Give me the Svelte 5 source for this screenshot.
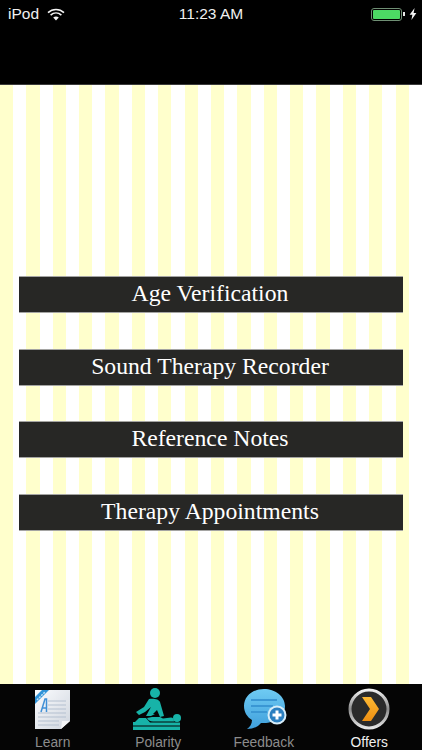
<script>
  const buttons = ['Age Verification', 'Sound Therapy Recorder', 'Reference Notes', 'Therapy Appointments'];
</script>

<div class="page">
  <header class="top">
    <div class="status">
      <div class="left">
        <span>iPod</span>
        <svg class="wifi" viewBox="0 0 18 13" width="18" height="13">
          <path d="M1 4.6C5.6 .4 12.4 .4 17 4.6" fill="none" stroke="#f4f4f4" stroke-width="1.6"/>
          <path d="M3.6 7.2C6.8 4.3 11.2 4.3 14.4 7.2" fill="none" stroke="#f4f4f4" stroke-width="1.6"/>
          <path d="M6.2 9.6C7.9 8.2 10.1 8.2 11.8 9.6L9 12.4Z" fill="#f4f4f4"/>
        </svg>
      </div>
      <span class="time">11:23 AM</span>
      <div class="right">
        <span class="batt"><span class="fill"></span></span>
        <span class="nub"></span>
        <svg class="bolt" viewBox="0 0 8 12" width="8" height="12"><path d="M5.6 0 .6 6.8h2.8L2.4 12l5-7H4.600Z" fill="#f4f4f4"/></svg>
      </div>
    </div>
  </header>

  <main class="stripes">
    {#each buttons as b}
      <div class="btn">{b}</div>
    {/each}
  </main>

  <nav class="tabs">
    <div class="tab learn">
      <svg viewBox="0 0 40 42" width="40" height="42">
        <defs><linearGradient id="doc" x1="0" y1="0" x2="1" y2="1"><stop offset="0" stop-color="#fbfcfe"/><stop offset="1" stop-color="#cfd5de"/></linearGradient></defs>
        <path d="M2 2H37V33L28 41H2Z" fill="url(#doc)"/>
        <path d="M28 41 29 33 37 33Z" fill="#f3f4f6"/>
        <g stroke="#b4bfcf" stroke-width="1.200">
          <path d="M15 13H33M15 17H33M15 21H33M5 25H33M5 29H33M5 33H26M5 37H26"/>
        </g>
        <path d="M2 16V9L9 2H16Z" fill="#2f93d8"/>
        <path d="M4 12 12 4" stroke="#bfe0f5" stroke-width="1.500" stroke-dasharray="2 1"/>
        <path d="M8 24 12 11H13.500V24M9.500 20H13" fill="none" stroke="#3f8fd6" stroke-width="1.500"/>
      </svg>
      <span>Learn</span>
    </div>
    <div class="tab">
      <svg viewBox="0 0 50 42" width="50" height="42" fill="#17b3a8">
        <circle cx="22" cy="5" r="5"/>
        <path d="M16 11C20 10 26 11 27 14L31 28 27 29 24 22 20 26H22L18 28H13L18 19 12 24 6 27 3 24 11 19Z"/>
        <circle cx="44" cy="30" r="4"/>
        <path d="M14 30 19 29H27L30 30.500 38 29.500C40 29.500 41 31 41 33.500H20C17 33.500 15 32 14 30Z"/>
        <path d="M2 34 6 30H13L17 34.500H47V37.500H0V34Z"/>
        <rect x="0" y="38.500" width="47" height="3.500"/>
      </svg>
      <span>Polarity</span>
    </div>
    <div class="tab feedback">
      <svg viewBox="0 0 46 44" width="46" height="44">
        <defs><linearGradient id="bub" x1="0" y1="0" x2="0" y2="1"><stop offset="0" stop-color="#6fcbf3"/><stop offset="1" stop-color="#3f9fdc"/></linearGradient></defs>
        <path d="M21 1C10 1 1 8 1 18 1 24 4 29 9 32 9 36 7 39 4 41 10 41 15 39 18 35 19 35 20 35 21 35 32 35 42 28 42 18 42 8 32 1 21 1Z" fill="url(#bub)"/>
        <path d="M8 12H34M8 18H30M8 24H24" stroke="#3a97d4" stroke-width="1.800"/>
        <circle cx="34" cy="27" r="9.500" fill="#d8eef9"/>
        <circle cx="34" cy="27" r="7.500" fill="#2b7fc0"/>
        <path d="M34 22.500V31.500M29.500 27H38.500" stroke="#fff" stroke-width="3"/>
      </svg>
      <span>Feedback</span>
    </div>
    <div class="tab active">
      <svg viewBox="0 0 42 42" width="42" height="42">
        <defs>
          <linearGradient id="ring" x1="0" y1="0" x2="0" y2="1"><stop offset="0" stop-color="#f0f0f0"/><stop offset=".5" stop-color="#8d8d8d"/><stop offset="1" stop-color="#e4e4e4"/></linearGradient>
          <linearGradient id="chev" x1="0" y1="0" x2="0" y2="1"><stop offset="0" stop-color="#fdb933"/><stop offset="1" stop-color="#ee8f12"/></linearGradient>
        </defs>
        <circle cx="21" cy="21" r="19" fill="#2b2b2b" stroke="url(#ring)" stroke-width="3"/>
        <path d="M14 9H23L31 21 23 33H14L22 21Z" fill="url(#chev)"/>
      </svg>
      <span>Offers</span>
    </div>
  </nav>
</div>

<style>
  :global(body) { margin: 0; background: #000; }
  .page {
    width: 422px;
    height: 750px;
    display: flex;
    flex-direction: column;
    font-family: "Liberation Sans", Arial, sans-serif;
    overflow: hidden;
  }
  .top { height: 85px; background: #000; border-bottom: 1px solid #3a3a3a; box-sizing: border-box; flex: none; }
  .status {
    height: 28px;
    display: grid;
    grid-template-columns: 1fr auto 1fr;
    align-items: center;
    padding: 0 4px 0 8px;
    color: #f0f0f0;
    font-size: 15.500px;
  }
  .left { display: flex; align-items: center; gap: 8px; }
  .time { font-size: 15.500px; font-weight: 400; margin-right: 4px; }
  .right { display: flex; align-items: center; justify-content: flex-end; }
  .batt {
    width: 31px; height: 13px; box-sizing: border-box;
    border: 1px solid #6f8f74; border-radius: 3px;
    padding: 1px; display: flex;
  }
  .fill { flex: 1; background: #4cd964; border-radius: 1px; }
  .nub { width: 2px; height: 4px; background: #e8e8e8; margin: 0 4px 0 1px; }
  .bolt { margin-right: 1px; }
  .stripes {
    flex: 1;
    background: repeating-linear-gradient(90deg, #ffffcc 0, #ffffcc 13.190px, #fff 13.190px, #fff 26.375px);
    padding: 191px 19px 0;
    display: flex;
    flex-direction: column;
    gap: 35.500px;
  }
  .btn {
    height: 37px;
    box-sizing: border-box;
    background: #272725;
    border: 1px solid #a5a5a3;
    border-width: 1px 0;
    color: #fff;
    font-family: "Liberation Serif", "Times New Roman", serif;
    font-size: 23.700px;
    padding: 0 2px 2px 0;
    display: flex;
    align-items: center;
    justify-content: center;
  }
  .tabs {
    height: 66px;
    background: #050505;
    display: grid;
    grid-template-columns: repeat(4, 1fr);
    flex: none;
  }
  .tab {
    position: relative;
    display: flex;
    flex-direction: column;
    align-items: center;
    color: #8c8c8c;
    font-size: 13.800px;
    height: 66px;
  }
  .tab svg { position: absolute; top: 4px; }
  .tab.learn svg { margin-left: 1px; }
  .tab.feedback svg { margin-left: 4px; }
  .tab span { position: absolute; bottom: 0; }
  .tab.active { color: #f0f0f0; }
</style>
